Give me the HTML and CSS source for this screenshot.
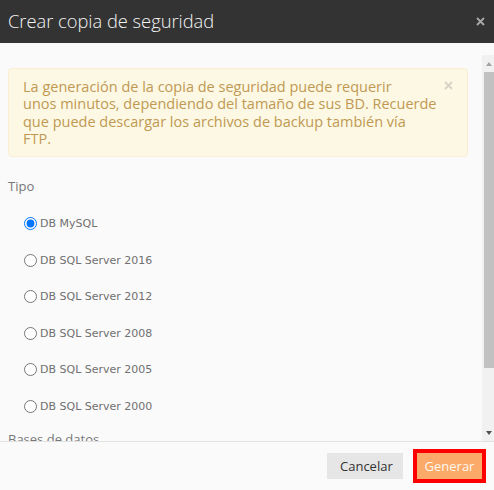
FILE: index.html
```html
<!DOCTYPE html>
<html lang="es">
<head>
<meta charset="utf-8">
<title>Crear copia de seguridad</title>
<link rel="stylesheet" href="styles.css">
</head>
<body>
<div class="modal">
  <header class="modal-header">
    <h3 class="modal-title">Crear copia de seguridad</h3>
    <button class="x-btn header-close" aria-label="Cerrar">
      <svg width="9" height="9" viewBox="0 0 9 9"><path d="M1 1L8 8M8 1L1 8" stroke="#a8a8a8" stroke-width="1.8"/></svg>
    </button>
  </header>
  <div class="modal-body">
    <div class="scroll-area">
      <div class="scroll-content">
        <div class="alert">
          <p class="alert-text">La generación de la copia de seguridad puede requerir<br>unos minutos, dependiendo del tamaño de sus BD. Recuerde<br>que puede descargar los archivos de backup también vía<br>FTP.</p>
          <button class="x-btn alert-close" aria-label="Cerrar">
            <svg width="9" height="9" viewBox="0 0 9 9"><path d="M1 1L8 8M8 1L1 8" stroke="#d6d2c6" stroke-width="1.8"/></svg>
          </button>
        </div>
        <div class="field-label">Tipo</div>
        <div class="radio-list">
          <label class="radio-row"><input type="radio" name="tipo" checked><span>DB MySQL</span></label>
          <label class="radio-row"><input type="radio" name="tipo"><span>DB SQL Server 2016</span></label>
          <label class="radio-row"><input type="radio" name="tipo"><span>DB SQL Server 2012</span></label>
          <label class="radio-row"><input type="radio" name="tipo"><span>DB SQL Server 2008</span></label>
          <label class="radio-row"><input type="radio" name="tipo"><span>DB SQL Server 2005</span></label>
          <label class="radio-row"><input type="radio" name="tipo"><span>DB SQL Server 2000</span></label>
        </div>
        <div class="field-label bases">Bases de datos</div>
      </div>
      <div class="scrollbar">
        <div class="sb-btn"><span class="arrow-up"></span></div>
        <div class="sb-track"><div class="sb-thumb"></div></div>
        <div class="sb-btn"><span class="arrow-down"></span></div>
      </div>
    </div>
  </div>
  <footer class="modal-footer">
    <button class="btn btn-cancel">Cancelar</button>
    <button class="btn btn-primary">Generar</button>
  </footer>
</div>
</body>
</html>
```

FILE: styles.css
```css
* { box-sizing: border-box; }
html, body { margin: 0; padding: 0; }
body {
  width: 494px;
  height: 490px;
  overflow: hidden;
  background: #fafafa;
  font-family: "Open Sans", "DejaVu Sans", sans-serif;
  font-size: 13px;
  color: #555;
}
.modal {
  display: flex;
  flex-direction: column;
  height: 490px;
  background: #fafafa;
}
.modal-header {
  height: 43px;
  flex: none;
  background: #333333;
  display: flex;
  align-items: center;
  justify-content: space-between;
  padding: 0 9px 0 8px;
}
.modal-title {
  margin: 0;
  font-weight: 300;
  font-size: 18.3px;
  color: #f4f4f4;
  line-height: 24px;
  padding-bottom: 2px;
}
.x-btn {
  border: 0;
  background: none;
  padding: 0;
  display: flex;
  cursor: pointer;
}
.modal-body {
  flex: none;
  padding-top: 12px;
}
.scroll-area {
  height: 386px;
  display: flex;
}
.scroll-content {
  flex: 1;
  overflow: hidden;
  padding: 13px 14px 0 8px;
}
.alert {
  display: flex;
  align-items: flex-start;
  background: #fcf8e3;
  border: 1px solid #fbeed5;
  border-radius: 4px;
  padding: 9px 14px 9px 14px;
  color: #c09853;
  margin-bottom: 20px;
}
.alert-text {
  flex: 1;
  margin: 0;
  font-size: 14.5px;
  line-height: 17.33px;
  white-space: nowrap;
}
.alert-close {
  margin-top: 3px;
}
.field-label {
  color: #777;
  line-height: 18px;
  font-size: 13px;
}
.radio-list {
  display: flex;
  flex-direction: column;
  padding: 10px 0 6px 16px;
}
.radio-row {
  height: 36.5px;
  display: flex;
  align-items: center;
  gap: 3px;
  font-family: "DejaVu Sans", sans-serif;
  font-size: 11px;
  color: #707070;
}
.radio-row input {
  margin: 0;
  width: 13px;
  height: 13px;
}
.scrollbar {
  width: 12px;
  flex: none;
  background: #f1f1f1;
  display: flex;
  flex-direction: column;
}
.sb-btn {
  height: 17px;
  display: flex;
  align-items: center;
  justify-content: center;
  padding-left: 2px;
}
.arrow-up {
  width: 0; height: 0;
  border-left: 3.5px solid transparent;
  border-right: 3.5px solid transparent;
  border-bottom: 4px solid #a3a3a3;
}
.arrow-down {
  width: 0; height: 0;
  border-left: 3.5px solid transparent;
  border-right: 3.5px solid transparent;
  border-top: 4px solid #505050;
}
.sb-track {
  flex: 1;
  padding-left: 2px;
}
.sb-thumb {
  height: 296px;
  background: #c1c1c1;
}
.modal-footer {
  flex: 1;
  border-top: 1px solid #e2e2e2;
  display: flex;
  align-items: center;
  justify-content: flex-end;
  padding: 0 12px 1px 0;
  gap: 14px;
}
.btn {
  height: 26px;
  border: 0;
  font-family: "Open Sans", sans-serif;
  font-size: 13px;
  padding: 0 13px;
  border-radius: 0;
}
.btn-cancel {
  background: #e6e6e6;
  color: #333;
  width: 76px;
}
.btn-primary {
  background: #fbaa69;
  color: #fff8ef;
  width: 65px;
  padding: 0;
  outline: 4px solid #ff0000;
}
```
